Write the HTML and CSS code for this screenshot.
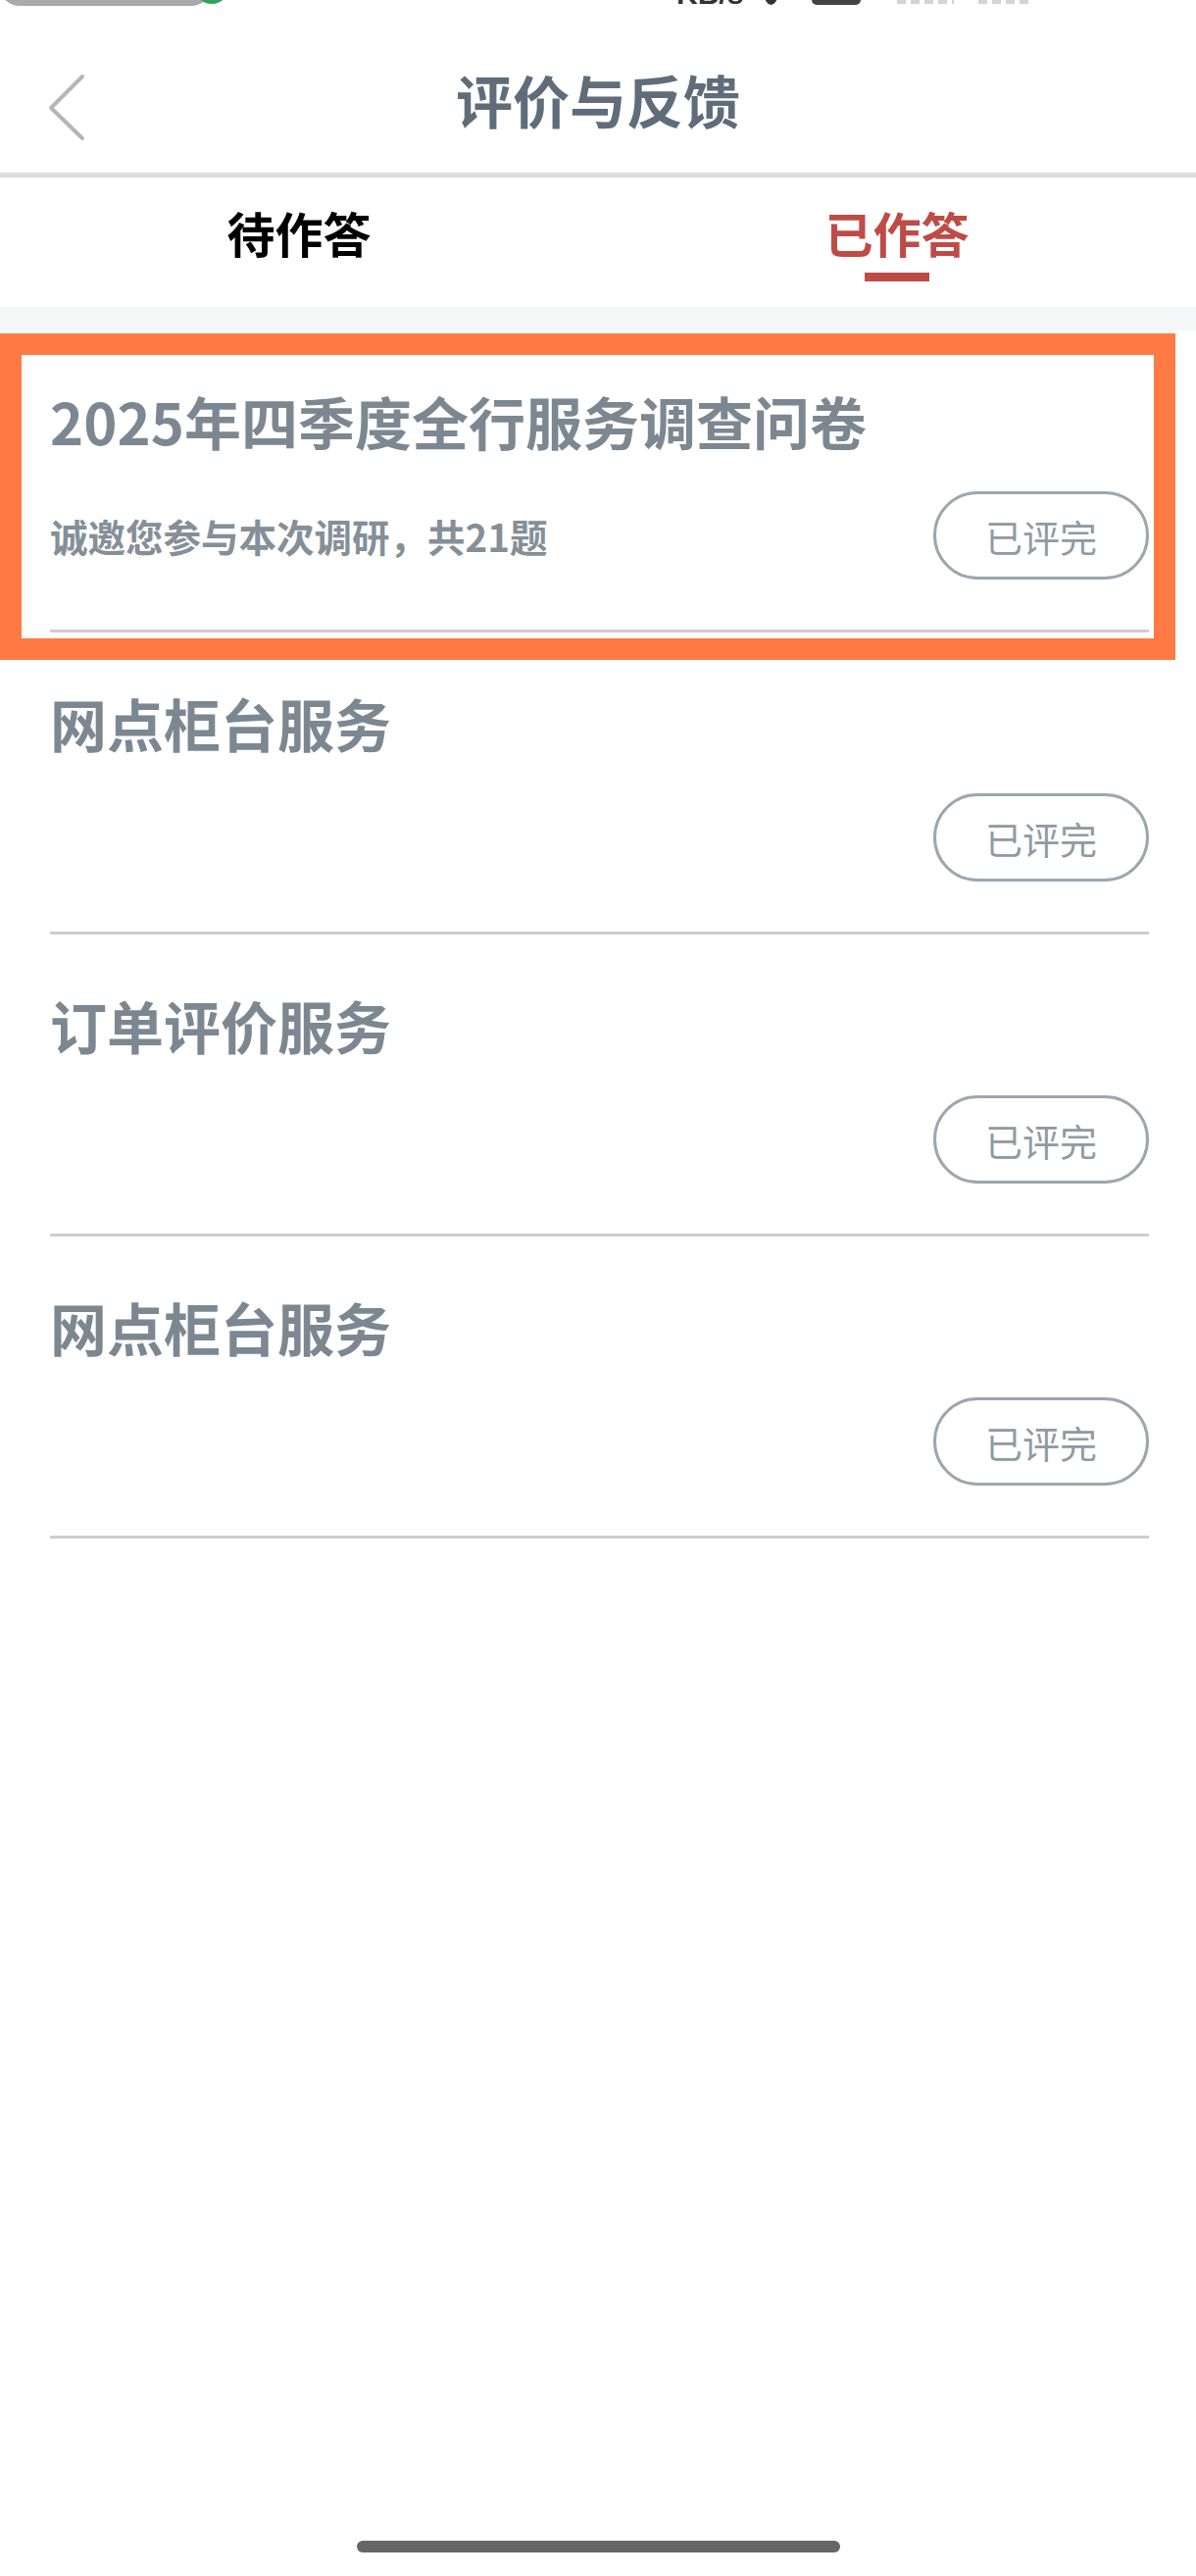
FILE: index.html
```html
<!DOCTYPE html>
<html lang="zh-CN">
<head>
    <meta charset="UTF-8">
    <meta name="viewport" content="width=device-width, initial-scale=1.0">
    <title>评价与反馈</title>
    <link rel="stylesheet" href="styles.css">
</head>
<body>

    <!-- Status bar (only the bottom edge is visible) -->
    <div class="status-bar">
        <div class="status-pill">
            <span class="pill-grey"></span>
            <span class="pill-green"></span>
        </div>
        <div class="status-right">
            <span class="speed">KB/s</span>
            <span class="st-dot"></span>
            <span class="st-rect"></span>
            <span class="st-signal"></span>
            <span class="st-signal st-signal-2"></span>
        </div>
    </div>

    <!-- Navigation header -->
    <div class="navbar">
        <svg class="back" width="44" height="76" viewBox="0 0 44 76">
            <polyline points="38,6 6,38 38,69" fill="none" stroke="#b5b5b5" stroke-width="4" stroke-linecap="round" stroke-linejoin="round"/>
        </svg>
        <div class="nav-title">评价与反馈</div>
        <div></div>
    </div>

    <!-- Tabs -->
    <div class="tabs">
        <div class="tab">
            <span class="tab-label">待作答</span>
        </div>
        <div class="tab tab-active">
            <span class="tab-label">已作答</span>
            <span class="tab-line"></span>
        </div>
    </div>

    <div class="band"></div>

    <!-- Answered list -->
    <div class="content">
        <div class="list">
            <div class="item">
                <div class="item-title">2025年四季度全行服务调查问卷</div>
                <div class="item-row">
                    <span class="item-desc">诚邀您参与本次调研，共21题</span>
                    <span class="done-btn">已评完</span>
                </div>
            </div>
            <div class="item">
                <div class="item-title">网点柜台服务</div>
                <div class="item-row">
                    <span class="item-desc"></span>
                    <span class="done-btn">已评完</span>
                </div>
            </div>
            <div class="item">
                <div class="item-title">订单评价服务</div>
                <div class="item-row">
                    <span class="item-desc"></span>
                    <span class="done-btn">已评完</span>
                </div>
            </div>
            <div class="item">
                <div class="item-title">网点柜台服务</div>
                <div class="item-row">
                    <span class="item-desc"></span>
                    <span class="done-btn">已评完</span>
                </div>
            </div>
        </div>

        <!-- highlight frame drawn over the first item -->
        <div class="highlight"></div>
    </div>

    <div class="home-area">
        <span class="home-bar"></span>
    </div>

</body>
</html>
```

FILE: styles.css
```css
/* page base */
body {
    margin: 0;
    height: 100vh;
    display: flex;
    flex-direction: column;
    background-color: #fff;
    font-family: "Noto Sans CJK SC", "Noto Sans", sans-serif;
}

/* status bar, cut off at the top */
.status-bar {
    height: 6px;
    overflow: hidden;
    display: flex;
    align-items: flex-end;
    flex-shrink: 0;
}

.status-pill {
    display: flex;
    align-items: flex-end;
    width: 235px;
}

.pill-grey {
    width: 215px;
    height: 40px;
    background-color: #aaa;
    border-radius: 0 0 20px 20px;
}

.pill-green {
    width: 38px;
    height: 40px;
    margin-left: -18px;
    margin-bottom: 2px;
    background-color: #2ea55b;
    border-radius: 50%;
}

.status-right {
    display: flex;
    align-items: flex-end;
    margin-left: 455px;
}

.speed {
    width: 57px;
    font-family: "Liberation Sans", sans-serif;
    font-weight: bold;
    font-size: 30px;
    line-height: 24px;
    color: #333;
}

.st-dot {
    width: 13px;
    height: 20px;
    margin-left: 33px;
    margin-bottom: 1px;
    background-color: #333;
    border-radius: 50%;
}

.st-rect {
    width: 50px;
    height: 20px;
    margin-left: 35px;
    margin-bottom: 1px;
    background-color: #444;
    border-radius: 5px;
}

.st-signal {
    width: 58px;
    height: 20px;
    margin-left: 37px;
    margin-bottom: 2px;
    background: repeating-linear-gradient(90deg, #d4d4d4 0 9px, transparent 9px 14px);
}

.st-signal-2 {
    width: 55px;
    margin-left: 25px;
}

/* header */
.navbar {
    display: grid;
    grid-template-columns: 1fr auto 1fr;
    height: 170px;
    border-bottom: 5px solid #dddddd;
    flex-shrink: 0;
}

.back {
    margin: 66px 0 0 46px;
}

.nav-title {
    margin-top: 60px;
    font-size: 58px;
    line-height: 70px;
    font-weight: 700;
    color: #5f6d7a;
}

/* tabs */
.tabs {
    display: flex;
    height: 132px;
    flex-shrink: 0;
}

.tab {
    flex: 1;
    display: flex;
    flex-direction: column;
    align-items: center;
    padding-top: 26px;
}

.tab-label {
    font-size: 49px;
    line-height: 60px;
    font-weight: 700;
    color: #000;
}

.tab-active .tab-label {
    color: #bf4b46;
}

.tab-line {
    width: 66px;
    height: 9px;
    margin-top: 11px;
    background-color: #bf4b46;
}

.band {
    height: 24px;
    background-color: #f5f6f8;
    flex-shrink: 0;
}

/* list */
.content {
    flex: 1;
    position: relative;
}

.list {
    margin: 0 48px 0 51px;
}

.item {
    padding-top: 57px;
    padding-bottom: 51px;
    border-bottom: 3px solid #cdcdd0;
}

.item-title {
    font-size: 58px;
    line-height: 70px;
    font-weight: 700;
    color: #7c8891;
}

.item-title-wide {
    letter-spacing: 0.3px;
}

.item-row {
    display: flex;
    justify-content: space-between;
    align-items: center;
    margin-top: 37px;
    height: 90px;
}

.item-desc {
    font-size: 38.5px;
    line-height: 50px;
    font-weight: 700;
    color: #858f98;
}

.done-btn {
    box-sizing: border-box;
    width: 220px;
    height: 90px;
    border: 3px solid #9ca7ad;
    border-radius: 45px;
    display: flex;
    justify-content: center;
    align-items: center;
    font-size: 38px;
    color: #8f9ba2;
}

/* orange annotation frame over the first row */
.highlight {
    position: absolute;
    left: 0;
    top: 3px;
    width: 1199px;
    height: 333px;
    box-sizing: border-box;
    border: 22px solid #ff7a45;
}

/* home indicator */
.home-area {
    display: flex;
    justify-content: center;
    padding-bottom: 24px;
    flex-shrink: 0;
}

.home-bar {
    width: 493px;
    height: 12px;
    background-color: #666;
    border-radius: 6px;
}
```
